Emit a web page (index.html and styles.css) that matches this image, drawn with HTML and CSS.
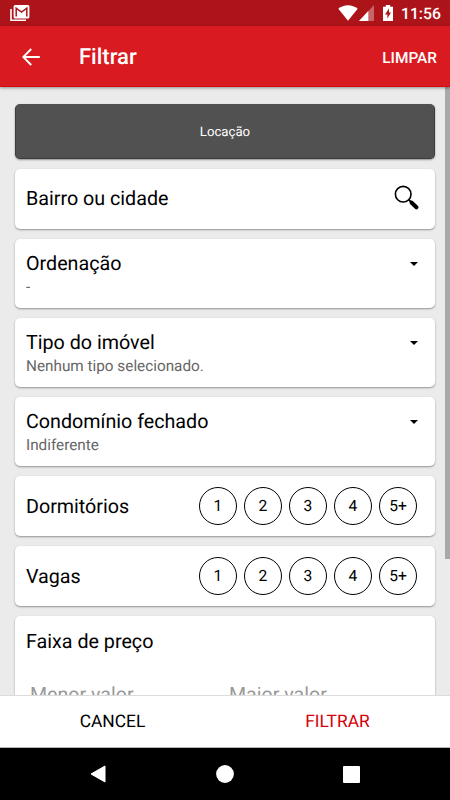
FILE: index.html
```
<!DOCTYPE html>
<html lang="pt-BR">
<head>
    <meta charset="UTF-8">
    <meta name="viewport" content="width=device-width, initial-scale=1.0">
    <title>Filtrar</title>
    <link rel="stylesheet" href="styles.css">
</head>
<body>
    <div class="status-bar">
        <svg class="icon-mail" width="20" height="17" viewBox="0 0 20 17">
            <path d="M1 4V15.2H16" fill="none" stroke="#fff" stroke-width="1.6"/>
            <rect x="3.6" y="0" width="15.8" height="13.4" rx="1.5" fill="#fff"/>
            <path d="M6.2 11.5V3.2L11.5 7L16.8 3.2V11.5" fill="none" stroke="#ad1419" stroke-width="1.5"/>
        </svg>
        <div class="status-icons">
            <svg width="20" height="16" viewBox="0 0 20 16">
                <path d="M0.3 3.8C5.8-.9 14.2-.9 19.7 3.8L10 15.8Z" fill="#fff"/>
            </svg>
            <svg class="icon-signal" width="15" height="16" viewBox="0 0 15 16">
                <path d="M15 0V16H0Z" fill="#c96468"/>
                <path d="M9.3 6V16H0Z" fill="#fff"/>
            </svg>
            <svg class="icon-battery" width="10" height="16" viewBox="0 0 10 16">
                <path d="M0 1.7H2.8V0H7.2V1.7H10V16H0Z" fill="#fff"/>
                <path d="M6 3.5L2 9.4H4.4V13.5L8 7.6H6Z" fill="#ad1419"/>
            </svg>
            <span class="clock">11:56</span>
        </div>
    </div>

    <header class="app-bar">
        <svg class="back" width="18" height="18" viewBox="0 0 18 18">
            <path d="M17.8 9H1.5M9.2 1L1.3 9L9.2 17" fill="none" stroke="#fff" stroke-width="2"/>
        </svg>
        <h1>Filtrar</h1>
        <span class="clear">LIMPAR</span>
    </header>

    <main class="content">
        <div class="filters">
            <div class="card card-dark">Locação</div>
            <div class="card card-row">
                <span class="label">Bairro ou cidade</span>
                <svg class="icon-search" width="25" height="25" viewBox="0 0 25 25">
                    <circle cx="9.2" cy="9.2" r="7.8" fill="none" stroke="#000" stroke-width="1.6"/>
                    <path d="M14.7 14.7L17.5 17.5" stroke="#000" stroke-width="1.8"/>
                    <path d="M17.7 17.7L22.4 22.3" stroke="#000" stroke-width="4" stroke-linecap="round"/>
                </svg>
            </div>
            <div class="card card-select">
                <div class="label">Ordenação</div>
                <div class="value">-</div>
                <span class="caret"></span>
            </div>
            <div class="card card-select">
                <div class="label">Tipo do imóvel</div>
                <div class="value">Nenhum tipo selecionado.</div>
                <span class="caret"></span>
            </div>
            <div class="card card-select">
                <div class="label">Condomínio fechado</div>
                <div class="value">Indiferente</div>
                <span class="caret"></span>
            </div>
            <div class="card card-row">
                <span class="label">Dormitórios</span>
                <div class="options">
                    <span>1</span><span>2</span><span>3</span><span>4</span><span>5+</span>
                </div>
            </div>
            <div class="card card-row">
                <span class="label">Vagas</span>
                <div class="options">
                    <span>1</span><span>2</span><span>3</span><span>4</span><span>5+</span>
                </div>
            </div>
            <div class="card card-price">
                <div class="label">Faixa de preço</div>
                <div class="range">
                    <span>Menor valor</span>
                    <span>Maior valor</span>
                </div>
            </div>
        </div>
        <div class="scroll-track"><div class="scroll-thumb"></div></div>
    </main>

    <div class="actions">
        <span>CANCEL</span>
        <span class="primary">FILTRAR</span>
    </div>

    <div class="nav-bar">
        <svg width="16" height="18" viewBox="0 0 16 18"><path d="M15 1V17L1 9Z" fill="#fff" stroke="#fff" stroke-linejoin="round"/></svg>
        <svg width="18" height="18" viewBox="0 0 18 18"><circle cx="9" cy="9" r="8.9" fill="#fff"/></svg>
        <svg width="17" height="17" viewBox="0 0 17 17"><rect width="17" height="17" rx="1" fill="#fff"/></svg>
    </div>
</body>
</html>
```

FILE: styles.css
```
* {
    margin: 0;
    padding: 0;
    box-sizing: border-box;
}

body {
    display: flex;
    flex-direction: column;
    width: 450px;
    height: 800px;
    overflow: hidden;
    background: #ebebeb;
    color: #000;
    font-family: Roboto, "Liberation Sans", sans-serif;
    text-rendering: geometricPrecision;
}

svg {
    display: block;
    flex: none;
}

/* --- Status bar --- */
.status-bar {
    display: flex;
    justify-content: space-between;
    flex: none;
    height: 26px;
    padding: 5px 9px 0 10px;
    background: #ad1419;
}

.status-icons {
    display: flex;
    color: #fff;
}

.icon-signal {
    margin-left: 1px;
}

.icon-battery {
    margin-left: 9px;
}

.clock {
    margin-left: 8px;
    font-size: 15.8px;
    font-weight: 500;
    line-height: 18px;
}

/* --- App bar --- */
.app-bar {
    display: flex;
    align-items: center;
    flex: none;
    height: 61px;
    padding: 1px 13px 0 22px;
    background: #d91a20;
    border-bottom: 1px solid #d00c10;
    color: #fff;
    box-shadow: 0 1px 3px rgba(0, 0, 0, 0.4);
    z-index: 1;
}

.app-bar h1 {
    margin-left: 39px;
    padding-top: 3px;
    font-size: 22px;
    font-weight: 500;
    line-height: 26px;
}

.clear {
    margin-left: auto;
    padding-top: 2px;
    font-size: 15.4px;
    font-weight: 500;
}

/* --- Filters --- */
.content {
    display: flex;
    flex: 1;
    min-height: 0;
    overflow: hidden;
}

.filters {
    display: flex;
    flex-direction: column;
    gap: 10px;
    flex: 1;
    min-width: 0;
    padding: 16.5px 10px 0 15px;
}

.card {
    flex: none;
    background: #fff;
    border-radius: 5px;
    box-shadow: 0 1px 2px rgba(0, 0, 0, 0.38);
}

.card-dark {
    display: flex;
    align-items: center;
    justify-content: center;
    height: 55.5px;
    padding-top: 2px;
    background: #515151;
    border: 1px solid #3c3c3c;
    border-top-color: #515151;
    color: #fff;
    font-size: 13.2px;
}

.card-row {
    display: flex;
    align-items: center;
    justify-content: space-between;
    height: 60px;
    padding: 0 18px 0 11px;
}

.card-row .label {
    padding-top: 2px;
}

.card-dark + .card-row {
    height: 59.5px;
    padding-right: 17px;
    padding-bottom: 2px;
}

.icon-search {
    margin-right: -1px;
}

.label {
    font-size: 19.7px;
    line-height: 24px;
}

.card-select {
    position: relative;
    height: 69px;
    padding: 13.5px 11px 0;
}

.value {
    margin-top: 1px;
    color: #666;
    font-size: 15.3px;
    line-height: 20px;
}

.caret {
    position: absolute;
    top: 23px;
    right: 17px;
    border: 4px solid transparent;
    border-top-color: #000;
    border-bottom: 0;
}

.options {
    display: flex;
    gap: 7px;
}

.options span {
    display: flex;
    align-items: center;
    justify-content: center;
    width: 38px;
    height: 38px;
    border: 1px solid #000;
    border-radius: 50%;
    font-size: 15.6px;
}

.card-price {
    height: 140px;
    padding: 14px 11px 0;
}

.range {
    display: flex;
    margin-top: 29px;
    padding-left: 4px;
    color: #999;
    font-size: 19.6px;
    line-height: 24px;
}

.range span {
    flex: none;
    width: 199px;
}

.range span:last-child {
    width: auto;
}

.scroll-track {
    flex: none;
    width: 5px;
}

.scroll-thumb {
    height: 472px;
    background: #a9a9a9;
}

/* --- Bottom actions --- */
.actions {
    display: flex;
    flex: none;
    height: 53px;
    background: #fff;
    border-top: 1px solid #dcdcdc;
    border-bottom: 1px solid #b5b5b5;
    font-size: 17.4px;
    line-height: 53px;
    text-align: center;
}

.actions span {
    flex: 1;
}

.actions .primary {
    color: #d6000a;
}

/* --- Navigation bar --- */
.nav-bar {
    display: flex;
    align-items: center;
    justify-content: space-between;
    flex: none;
    height: 52px;
    padding: 0 90px;
    background: #000;
}
```
